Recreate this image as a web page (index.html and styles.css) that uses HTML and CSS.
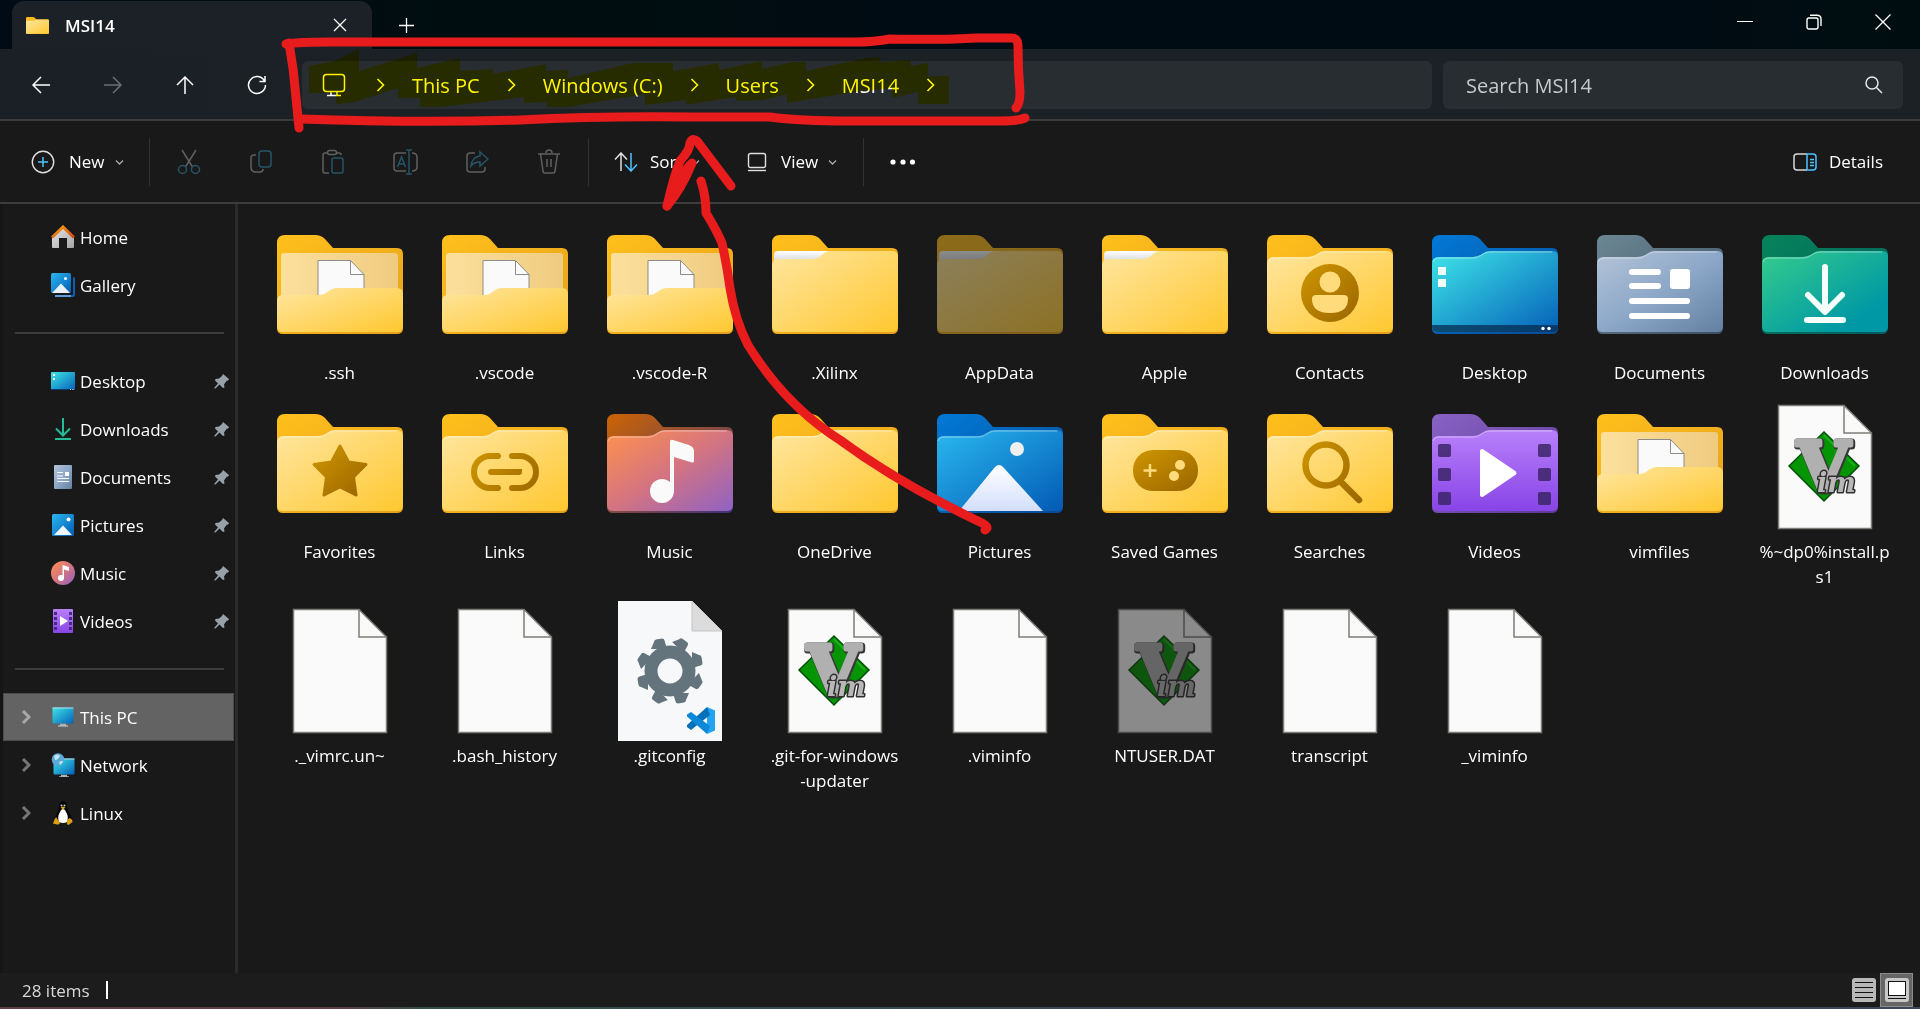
FILE: index.html
```html
<!DOCTYPE html>
<html lang="en">
<head>
<meta charset="utf-8">
<meta name="viewport" content="width=device-width, initial-scale=1">
<title>MSI14</title>
<link rel="stylesheet" href="styles.css">
</head>
<body>

<svg class="defs" width="0" height="0" aria-hidden="true">
  <defs>
    <linearGradient id="yellowFront" x1="0" y1="0" x2="1" y2="1"><stop offset="0" stop-color="#ffe6a0"/><stop offset="1" stop-color="#ffc830"/></linearGradient>
    <linearGradient id="yellowBack" x1="0" y1="0" x2="1" y2="1"><stop offset="0" stop-color="#ffc01c"/><stop offset="1" stop-color="#e5a01c"/></linearGradient>
    <linearGradient id="panel" x1="0" y1="0" x2="1" y2="0"><stop offset="0" stop-color="#fbe09c"/><stop offset="1" stop-color="#efcb80"/></linearGradient>
    <linearGradient id="paper" x1="0" y1="0" x2="0" y2="1"><stop offset="0" stop-color="#ffffff"/><stop offset="1" stop-color="#cfd2d6"/></linearGradient>
    <linearGradient id="ochre" x1="0" y1="0" x2="1" y2="1"><stop offset="0" stop-color="#cf9600"/><stop offset="1" stop-color="#9a6600"/></linearGradient>
    <linearGradient id="ochreFlat" gradientUnits="userSpaceOnUse" x1="30" y1="35" x2="96" y2="85"><stop offset="0" stop-color="#cf9600"/><stop offset="1" stop-color="#9a6600"/></linearGradient>
    <linearGradient id="deskFront" x1="0" y1="0" x2="1" y2="1"><stop offset="0" stop-color="#3ee6e8"/><stop offset="1" stop-color="#0560b8"/></linearGradient>
    <linearGradient id="blueBack" x1="0" y1="0" x2="1" y2="1"><stop offset="0" stop-color="#0279d6"/><stop offset="1" stop-color="#0a4a94"/></linearGradient>
    <linearGradient id="picFront" x1="0" y1="0" x2="1" y2="1"><stop offset="0" stop-color="#2ab8f0"/><stop offset="1" stop-color="#035ab4"/></linearGradient>
    <linearGradient id="docFront" x1="0" y1="0" x2="1" y2="1"><stop offset="0" stop-color="#b4c4d8"/><stop offset=".5" stop-color="#8da8c8"/><stop offset="1" stop-color="#6480a0"/></linearGradient>
    <linearGradient id="docBack" x1="0" y1="0" x2="1" y2="1"><stop offset="0" stop-color="#6c8794"/><stop offset="1" stop-color="#3c5064"/></linearGradient>
    <linearGradient id="downFront" x1="0" y1="0" x2="1" y2="1"><stop offset="0" stop-color="#34cc8c"/><stop offset=".8" stop-color="#0098a4"/><stop offset="1" stop-color="#0098a8"/></linearGradient>
    <linearGradient id="downBack" x1="0" y1="0" x2="1" y2="1"><stop offset="0" stop-color="#06845a"/><stop offset="1" stop-color="#045c60"/></linearGradient>
    <linearGradient id="musicFront" x1="0" y1="0" x2="1" y2="1"><stop offset="0" stop-color="#ff924c"/><stop offset=".5" stop-color="#d47480"/><stop offset="1" stop-color="#8f62c4"/></linearGradient>
    <linearGradient id="musicBack" x1="0" y1="0" x2="1" y2="1"><stop offset="0" stop-color="#cc6404"/><stop offset="1" stop-color="#40307c"/></linearGradient>
    <linearGradient id="videoFront" x1="0" y1="0" x2="0" y2="1"><stop offset="0" stop-color="#b880fa"/><stop offset="1" stop-color="#8844e6"/></linearGradient>
    <linearGradient id="videoBack" x1="0" y1="0" x2="1" y2="1"><stop offset="0" stop-color="#8862c4"/><stop offset="1" stop-color="#5c3a98"/></linearGradient>
    <linearGradient id="snow" x1="0" y1="0" x2="0" y2="1"><stop offset="0" stop-color="#ffffff"/><stop offset="1" stop-color="#d2defc"/></linearGradient>
    <linearGradient id="roof" x1="0" y1="0" x2="1" y2="1"><stop offset="0" stop-color="#ffa010"/><stop offset="1" stop-color="#d04810"/></linearGradient>
    <linearGradient id="wall" x1="0" y1="0" x2="1" y2="1"><stop offset="0" stop-color="#e6e6e6"/><stop offset="1" stop-color="#a4a4a4"/></linearGradient>

    <g id="folder">
      <path class="folder-back" d="M0 8Q0 0 8 0H38Q44 0 48 4L56 13H120Q126 13 126 19V93Q126 99 120 99H6Q0 99 0 93Z"/>
      <path class="folder-front" d="M0 29Q0 22 7 22H40Q46 22 50 19Q54 16 58 16H120Q126 16 126 22V91Q126 97 120 97H6Q0 97 0 91Z"/>
      <path d="M1 27Q2 23 7 23H40Q46 23 51 19Q54 17 58 17H120" fill="none" stroke="#fff" stroke-opacity=".3" stroke-width="1.5"/>
    </g>
    <g id="folder-papers">
      <path class="folder-back" d="M0 8Q0 0 8 0H38Q44 0 48 4L56 13H120Q126 13 126 19V93Q126 99 120 99H6Q0 99 0 93Z"/>
      <path d="M2 28V20Q2 16 6 16H60V28Z" fill="url(#paper)"/>
      <path class="folder-front" d="M0 30Q0 24 7 24H40Q46 24 50 20Q54 16 58 16H120Q126 16 126 22V91Q126 97 120 97H6Q0 97 0 91Z"/>
    </g>
    <g id="folder-open">
      <path class="folder-back" d="M0 8Q0 0 8 0H38Q44 0 48 4L56 13H120Q126 13 126 19V93Q126 99 120 99H6Q0 99 0 93Z"/>
      <path d="M4 62V21Q4 18 7 18H118Q121 18 121 21V62Z" fill="url(#panel)"/>
      <path d="M41 64V25.500H73.500L87 39.500V64Z" fill="#fafafa" stroke="#8c8c88"/>
      <path d="M73.500 25.500V39.500H87" fill="none" stroke="#8c8c88"/>
      <path class="folder-front" d="M0 66Q0 60 6 60H42Q47 60 51 56.500Q55 53 60 53H120Q126 53 126 59V91Q126 97 120 97H6Q0 97 0 91Z"/>
    </g>
    <g id="doc">
      <path d="M25.500 10.500H91L118.500 38V133.500H25.500Z" fill="#fafafa" stroke="#7c7c78" stroke-width="1.500"/>
      <path d="M91 10.500V38H118.500" fill="none" stroke="#7c7c78" stroke-width="1.500"/>
    </g>
    <g id="vim">
      <path d="M71 37L106 71L71 106L36 71Z" fill="#049404" stroke="#04500a" stroke-width="1.500"/>
      <path d="M71 40L102 71" stroke="#2cc42c" stroke-opacity=".6" stroke-width="2" fill="none"/>
      <text class="vim-v vim-edge" x="45" y="96">V</text>
      <text class="vim-v" x="44" y="95">V</text>
      <text class="vim-im vim-im-edge" x="64" y="97">im</text>
      <text class="vim-im" x="64" y="97">im</text>
    </g>

    <g id="pin"><path d="M9 1L15 6L14 7.500L12.500 8L10 11.500L10.500 14.500L9 15L5.500 11.500L1.500 15.500L.5 15.500V14.500L4 10.500L1 7.500L1.500 6L5 5.500L8 3Z" fill="#98a1a8"/></g>
    <g id="chev-down"><path d="M1 3.500L4.500 7L8 3.500" fill="none" stroke="#a8a8a8" stroke-width="1.300"/></g>
    <g id="chev-right"><path d="M2 1L8 7L2 13" fill="none" stroke="currentColor"/></g>
    <g id="monitor">
      <rect x="1.500" y="2.500" width="21" height="16" rx="1" fill="url(#deskFront)"/>
      <path d="M1.500 3H22.500" stroke="#b4d8e0" stroke-width="1"/>
      <path d="M7 21H17M9 19.500H15" stroke="#a8b4bc" stroke-width="1.500"/>
    </g>
  </defs>
</svg>

<header class="titlebar">
  <div class="tab">
    <svg class="tab-icon yellow" viewBox="0 0 126 99" preserveAspectRatio="none"><use href="#folder"/></svg>
    <span class="tab-title">MSI14</span>
    <button class="tab-close" aria-label="Close tab"><svg width="14" height="14" viewBox="0 0 14 14"><path d="M1 1L13 13M13 1L1 13" stroke="#fff" stroke-width="1.300"/></svg></button>
  </div>
  <button class="tab-new" aria-label="New tab"><svg width="15" height="15" viewBox="0 0 15 15"><path d="M7.500 0V15M0 7.500H15" stroke="#fff" stroke-width="1.300"/></svg></button>
  <div class="window-controls">
    <button aria-label="Minimize"><svg width="16" height="16" viewBox="0 0 16 16"><path d="M0 7.500H16" stroke="#fff"/></svg></button>
    <button aria-label="Restore"><svg width="16" height="16" viewBox="0 0 16 16" fill="none" stroke="#fff" stroke-width="1.400"><rect x="1" y="4" width="11" height="11" rx="2"/><path d="M4 1.200H11Q15 1.200 15 5V12"/></svg></button>
    <button aria-label="Close"><svg width="16" height="16" viewBox="0 0 16 16"><path d="M.5 .5L15.500 15.500M15.500 .5L.5 15.500" stroke="#fff" stroke-width="1.300"/></svg></button>
  </div>
</header>

<div class="navbar">
  <button class="nav-btn" aria-label="Back"><svg width="20" height="20" viewBox="0 0 20 20"><path d="M19 10H2M10 2L2 10L10 18"/></svg></button>
  <button class="nav-btn off" aria-label="Forward"><svg width="20" height="20" viewBox="0 0 20 20"><path d="M1 10H18M10 2L18 10L10 18"/></svg></button>
  <button class="nav-btn" aria-label="Up"><svg width="20" height="20" viewBox="0 0 20 20"><path d="M10 19V2M2 10L10 2L18 10"/></svg></button>
  <button class="nav-btn" aria-label="Refresh"><svg width="20" height="20" viewBox="0 0 20 20"><path d="M17.500 6A8.500 8.500 0 1 0 18.500 10M18 1V6.500H12.500"/></svg></button>
  <nav class="address" aria-label="Address">
    <svg class="pc-icon" width="24" height="24" viewBox="0 0 24 24" fill="none" stroke="#fff" stroke-width="1.500"><rect x="1.500" y="1.500" width="21" height="17" rx="3"/><path d="M9 18.500V22M15 18.500V22M5 22.500H19"/></svg>
    <svg class="crumb-sep" viewBox="0 0 10 14"><use href="#chev-right"/></svg>
    <a href="#">This PC</a>
    <svg class="crumb-sep" viewBox="0 0 10 14"><use href="#chev-right"/></svg>
    <a href="#">Windows (C:)</a>
    <svg class="crumb-sep" viewBox="0 0 10 14"><use href="#chev-right"/></svg>
    <a href="#">Users</a>
    <svg class="crumb-sep" viewBox="0 0 10 14"><use href="#chev-right"/></svg>
    <a href="#">MSI14</a>
    <svg class="crumb-sep" viewBox="0 0 10 14"><use href="#chev-right"/></svg>
  </nav>
  <div class="search">
    <input type="search" placeholder="Search MSI14" aria-label="Search MSI14">
    <svg width="18" height="18" viewBox="0 0 18 18" fill="none" stroke="#e8e8e8" stroke-width="1.500"><circle cx="7" cy="7" r="6"/><path d="M11.500 11.500L17 17"/></svg>
  </div>
</div>

<div class="commands">
  <button class="cmd cmd-new">
    <svg width="24" height="24" viewBox="0 0 24 24" fill="none"><circle cx="12" cy="12" r="10.700" stroke="#e0e0e0" stroke-width="1.400"/><path d="M12 7V17M7 12H17" stroke="#4cc2ff" stroke-width="1.500"/></svg>
    <span>New</span><svg width="9" height="10" viewBox="0 0 9 10"><use href="#chev-down"/></svg>
  </button>
  <span class="rule"></span>
  <button class="cmd-icon" aria-label="Cut"><svg width="24" height="26" viewBox="0 0 24 26"><path d="M5 1L15.500 18M19 1L8.500 18"/><g class="blue"><circle cx="5.500" cy="20.500" r="4"/><circle cx="18.500" cy="20.500" r="4"/></g></svg></button>
  <button class="cmd-icon" aria-label="Copy"><svg width="24" height="26" viewBox="0 0 24 26"><path d="M7 6H5Q2 6 2 9V18Q2 23 7 23H11Q14 23 14 20"/><rect class="blue" x="10" y="2" width="12" height="16" rx="3"/></svg></button>
  <button class="cmd-icon" aria-label="Paste"><svg width="24" height="26" viewBox="0 0 24 26"><path d="M7 4H4Q2 4 2 6V22Q2 24 4 24H8M16 4H18Q20 4 20 6"/><rect x="6.500" y="1.500" width="9" height="4" rx="2"/><rect class="blue" x="11" y="9" width="11" height="15" rx="2"/></svg></button>
  <button class="cmd-icon" aria-label="Rename"><svg width="26" height="26" viewBox="0 0 26 26"><path d="M14 4H5Q2 4 2 7V19Q2 22 5 22H14M20 4Q25 4 25 8V18Q25 22 20 22"/><path class="blue" d="M14 1H20M17 1V25M14 25H20M5.500 18L9.500 8L13.500 18M7 15H12"/></svg></button>
  <button class="cmd-icon" aria-label="Share"><svg width="24" height="26" viewBox="0 0 24 26"><path d="M10 4H5Q2 4 2 7V20Q2 23 5 23H17Q20 23 20 20V18"/><path class="blue" d="M15 3L23 10L15 17V13Q9 13 6 17Q7 8 15 7Z"/></svg></button>
  <button class="cmd-icon" aria-label="Delete"><svg width="24" height="26" viewBox="0 0 24 26"><path d="M1 5H23M3.500 5L6 22Q6 24 8 24H16Q18 24 18 22L20.500 5M9 4Q9 1 12 1Q15 1 15 4M10 10V18M14 10V18"/></svg></button>
  <span class="rule"></span>
  <button class="cmd cmd-sort">
    <svg width="24" height="20" viewBox="0 0 24 20" fill="none" stroke-width="1.500"><path d="M7 19V1M1 7.500L7 1L13 7.500" stroke="#e0e0e0"/><path d="M17 1V19M11 12.500L17 19L23 12.500" stroke="#4cc2ff"/></svg>
    <span>Sort</span><svg width="9" height="10" viewBox="0 0 9 10"><use href="#chev-down"/></svg>
  </button>
  <button class="cmd cmd-view">
    <svg width="20" height="20" viewBox="0 0 20 20" fill="none" stroke="#e0e0e0" stroke-width="1.400"><rect x="1.500" y="1.500" width="17" height="14" rx="2"/><path d="M1 18.500H19"/></svg>
    <span>View</span><svg width="9" height="10" viewBox="0 0 9 10"><use href="#chev-down"/></svg>
  </button>
  <span class="rule"></span>
  <button class="cmd-icon" aria-label="See more"><svg width="26" height="6" viewBox="0 0 26 6"><g fill="#fff" stroke="none"><circle cx="3" cy="3" r="2.600"/><circle cx="13" cy="3" r="2.600"/><circle cx="22.500" cy="3" r="2.600"/></g></svg></button>
  <button class="cmd cmd-details">
    <svg width="24" height="18" viewBox="0 0 24 18" fill="none" stroke-width="1.500"><path d="M14 1H4Q1 1 1 4V14Q1 17 4 17H14" stroke="#d8d8d8"/><path d="M14 1H20Q23 1 23 4V14Q23 17 20 17H14ZM17 6.500H21M17 9.500H21M17 12.500H21" stroke="#4cc2ff"/></svg>
    <span>Details</span>
  </button>
</div>

<div class="body">
  <nav class="sidebar" aria-label="Places">
    <a class="place" href="#"><svg class="place-icon" viewBox="0 0 24 24"><path d="M1 13L12 3L23 13V22Q23 23 22 23H16V13H8V23H2Q1 23 1 22Z" fill="url(#wall)"/><path d="M1 12.500L12 2L23 12.500" fill="none" stroke="url(#roof)" stroke-width="3"/></svg>Home</a>
    <a class="place" href="#"><svg class="place-icon" viewBox="0 0 24 24"><path d="M22 4Q24 4 24 6V22Q24 24 22 24H20V22H22Z" fill="#0a60b8"/><path d="M4 23H20" stroke="#5c9cdc" stroke-width="2"/><rect width="20" height="20" rx="1.500" fill="url(#picFront)"/><path d="M1 20L10 10.500L19 20Z" fill="#e8f0fc"/><circle cx="14.500" cy="5.500" r="1.500" fill="#fff"/></svg>Gallery</a>
    <hr>
    <a class="place" href="#"><svg class="place-icon" viewBox="0 0 24 24"><rect y="3" width="24" height="18" rx="1" fill="url(#deskFront)"/><path d="M2 5H4V7H2ZM2 9H4V11H2Z" fill="#fff"/><path d="M0 20.500H24" stroke="#0a3c78"/><path d="M19 20.500H20M21.500 20.500H22.500" stroke="#fff"/></svg>Desktop<svg class="pin" viewBox="0 0 16 16"><use href="#pin"/></svg></a>
    <a class="place" href="#"><svg class="place-icon" viewBox="0 0 24 24" fill="none" stroke="#22bc98" stroke-width="2"><path d="M12 1V18M5 11.500L12 18.500L19 11.500M4 22H20"/></svg>Downloads<svg class="pin" viewBox="0 0 16 16"><use href="#pin"/></svg></a>
    <a class="place" href="#"><svg class="place-icon" viewBox="0 0 24 24"><rect x="3" width="18" height="24" rx="1" fill="url(#docFront)"/><path d="M6 7.500H12M6 11H12M6 13.500H18M6 16.500H18" stroke="#fff" stroke-width="1.200"/><rect x="14" y="7" width="4" height="4" fill="#fff"/></svg>Documents<svg class="pin" viewBox="0 0 16 16"><use href="#pin"/></svg></a>
    <a class="place" href="#"><svg class="place-icon" viewBox="0 0 24 24"><rect x="1" y="1" width="22" height="22" rx="1.500" fill="url(#picFront)"/><path d="M3 22L12 12.500L21 22Z" fill="#f0f6fe"/><circle cx="17.500" cy="6.500" r="2" fill="#fff"/></svg>Pictures<svg class="pin" viewBox="0 0 16 16"><use href="#pin"/></svg></a>
    <a class="place" href="#"><svg class="place-icon" viewBox="0 0 24 24"><circle cx="12" cy="12" r="12" fill="url(#musicFront)"/><circle cx="10" cy="17" r="3" fill="#fff"/><path d="M11.500 17V4L18 6V10L13 8.500V17Z" fill="#fff"/></svg>Music<svg class="pin" viewBox="0 0 16 16"><use href="#pin"/></svg></a>
    <a class="place" href="#"><svg class="place-icon" viewBox="0 0 24 24"><rect x="2" width="20" height="24" rx="1" fill="url(#videoFront)"/><path d="M3 3H6V6H3ZM3 8H6V11H3ZM3 13H6V16H3ZM3 18H6V21H3ZM18 3H21V6H18ZM18 8H21V11H18ZM18 13H21V16H18ZM18 18H21V21H18Z" fill="#4a2888"/><path d="M9 7V17L17 12Z" fill="#fff"/></svg>Videos<svg class="pin" viewBox="0 0 16 16"><use href="#pin"/></svg></a>
    <hr>
    <a class="place root selected" href="#"><svg class="expand" viewBox="0 0 10 14"><use href="#chev-right"/></svg><svg class="place-icon" viewBox="0 0 24 24"><use href="#monitor"/></svg>This PC</a>
    <a class="place root" href="#"><svg class="expand" viewBox="0 0 10 14"><use href="#chev-right"/></svg><svg class="place-icon" viewBox="0 0 24 24"><g transform="translate(1 3)"><use href="#monitor"/></g><circle cx="7" cy="6.500" r="6.300" fill="#5aa8d8"/><path d="M3 3Q7 0 9 3Q7 7 4 7ZM8 9Q12 7 12 9L9 12Z" fill="#c4e4f0"/></svg>Network</a>
    <a class="place root" href="#"><svg class="expand" viewBox="0 0 10 14"><use href="#chev-right"/></svg><svg class="place-icon" viewBox="0 0 24 24"><path d="M12 0Q16 0 16 6Q16 9 19 13Q22 18 20 20L12 22L4 20Q3 17 6 12Q8 9 8 6Q8 0 12 0Z" fill="#050505"/><path d="M12 8Q14 8 15 11Q18 16 16 21Q12 23 8 21Q6 16 9 11Q10 8 12 8Z" fill="#fff"/><circle cx="10.500" cy="4.500" r="1" fill="#ccc"/><circle cx="13.500" cy="4.500" r="1" fill="#ccc"/><path d="M9.500 6.500L12 5.500L14.500 6.500L12 8.500Z" fill="#e0a010"/><path d="M5 16L9 22Q8 24 6 23.500L2 22.500Q3 19 5 16ZM19 17Q22 19 21.500 21L17.500 24Q15.500 24 16 20Q16 18 19 17Z" fill="#dca010"/></svg>Linux</a>
  </nav>

  <main class="files">
    <ul class="grid">
      <li><a class="item" href="#"><svg class="art yellow" viewBox="-9 -19 144 144"><use href="#folder-open"/></svg><span>.ssh</span></a></li>
      <li><a class="item" href="#"><svg class="art yellow" viewBox="-9 -19 144 144"><use href="#folder-open"/></svg><span>.vscode</span></a></li>
      <li><a class="item" href="#"><svg class="art yellow" viewBox="-9 -19 144 144"><use href="#folder-open"/></svg><span>.vscode-R</span></a></li>
      <li><a class="item" href="#"><svg class="art yellow" viewBox="-9 -19 144 144"><use href="#folder-papers"/></svg><span>.Xilinx</span></a></li>
      <li><a class="item hidden-file" href="#"><svg class="art yellow" viewBox="-9 -19 144 144"><use href="#folder-papers"/></svg><span>AppData</span></a></li>
      <li><a class="item" href="#"><svg class="art yellow" viewBox="-9 -19 144 144"><use href="#folder-papers"/></svg><span>Apple</span></a></li>
      <li><a class="item" href="#"><svg class="art yellow" viewBox="-9 -19 144 144"><use href="#folder"/><circle cx="63" cy="58" r="29" fill="url(#ochre)"/><circle cx="63" cy="47" r="10.500" fill="#ffdb7c"/><path d="M49 60H77Q81 60 81 64Q81 78 63 78Q45 78 45 64Q45 60 49 60Z" fill="#ffdb7c"/></svg><span>Contacts</span></a></li>
      <li><a class="item" href="#"><svg class="art desk" viewBox="-9 -19 144 144"><use href="#folder"/><path d="M6 32H14V40H6ZM6 44H14V52H6Z" fill="#f0fcfc"/><path d="M0 90H126V91Q126 97 120 97H6Q0 97 0 91Z" fill="#062c50" fill-opacity=".75"/><circle cx="111" cy="93.500" r="1.700" fill="#fff"/><circle cx="117" cy="93.500" r="1.700" fill="#fff"/></svg><span>Desktop</span></a></li>
      <li><a class="item" href="#"><svg class="art docs" viewBox="-9 -19 144 144"><use href="#folder"/><path d="M35 37H61M35 51H61M35 66H90M35 81H90" stroke="#fff" stroke-width="6" stroke-linecap="round"/><rect x="73" y="34" width="20" height="20" rx="3" fill="#fff"/></svg><span>Documents</span></a></li>
      <li><a class="item" href="#"><svg class="art down" viewBox="-9 -19 144 144"><use href="#folder"/><path d="M63 32V76M46 60L63 77L80 60M45 85H81" fill="none" stroke="#f4fffc" stroke-width="6" stroke-linecap="round" stroke-linejoin="round"/></svg><span>Downloads</span></a></li>

      <li><a class="item" href="#"><svg class="art yellow" viewBox="-9 -19 144 144"><use href="#folder"/><path d="M63 32L71.500 48L89 50.500L76.500 63L79 81L63 73L47 81L49.500 63L37 50.500L54.500 48Z" fill="url(#ochre)" stroke="url(#ochre)" stroke-width="3" stroke-linejoin="round"/></svg><span>Favorites</span></a></li>
      <li><a class="item" href="#"><svg class="art yellow" viewBox="-9 -19 144 144"><use href="#folder"/><path d="M56 42H48A16 16 0 0 0 48 74H56M70 42H78A16 16 0 0 1 78 74H70M49 58H77V58.010" fill="none" stroke="url(#ochreFlat)" stroke-width="6" stroke-linecap="round"/></svg><span>Links</span></a></li>
      <li><a class="item" href="#"><svg class="art music" viewBox="-9 -19 144 144"><use href="#folder"/><circle cx="55" cy="77" r="12" fill="#fafafa"/><path d="M63 77V28Q63 25 66 26L82 31Q87 33 87 37V47Q87 49 85 48.500L67 43V77Z" fill="#fafafa"/></svg><span>Music</span></a></li>
      <li><a class="item" href="#"><svg class="art yellow" viewBox="-9 -19 144 144"><use href="#folder"/></svg><span>OneDrive</span></a></li>
      <li><a class="item" href="#"><svg class="art pics" viewBox="-9 -19 144 144"><use href="#folder"/><path d="M22 97L58 53Q62 49 66 53L106 97Z" fill="url(#snow)"/><circle cx="80" cy="35" r="7" fill="#f0f0f0"/></svg><span>Pictures</span></a></li>
      <li><a class="item" href="#"><svg class="art yellow" viewBox="-9 -19 144 144"><use href="#folder"/><rect x="31" y="36" width="65" height="41" rx="20" fill="url(#ochre)"/><path d="M41.500 56.500H54.500M48 50V63" stroke="#ffdb7c" stroke-width="2.500"/><circle cx="78" cy="51" r="5" fill="#ffdb7c"/><circle cx="72" cy="62" r="5" fill="#ffdb7c"/></svg><span>Saved Games</span></a></li>
      <li><a class="item" href="#"><svg class="art yellow" viewBox="-9 -19 144 144"><use href="#folder"/><circle cx="59" cy="51" r="20.500" fill="none" stroke="url(#ochreFlat)" stroke-width="6.500"/><path d="M73 67L92 86" stroke="url(#ochreFlat)" stroke-width="6.500" stroke-linecap="round"/></svg><span>Searches</span></a></li>
      <li><a class="item" href="#"><svg class="art video" viewBox="-9 -19 144 144"><use href="#folder"/><g fill="#3c2468" fill-opacity=".85"><rect x="6" y="30" width="13" height="13" rx="2"/><rect x="6" y="54" width="13" height="13" rx="2"/><rect x="6" y="78" width="13" height="13" rx="2"/><rect x="106" y="30" width="13" height="13" rx="2"/><rect x="106" y="54" width="13" height="13" rx="2"/><rect x="106" y="78" width="13" height="13" rx="2"/></g><path d="M50 37V81L82.500 59Z" fill="#fff" stroke="#fff" stroke-width="4" stroke-linejoin="round"/></svg><span>Videos</span></a></li>
      <li><a class="item" href="#"><svg class="art yellow" viewBox="-9 -19 144 144"><use href="#folder-open"/></svg><span>vimfiles</span></a></li>
      <li><a class="item" href="#"><svg class="art" viewBox="0 0 144 144"><use href="#doc"/><use href="#vim"/></svg><span>%~dp0%install.p<wbr>s1</span></a></li>

      <li><a class="item" href="#"><svg class="art" viewBox="0 0 144 144"><use href="#doc"/></svg><span>._vimrc.un~</span></a></li>
      <li><a class="item" href="#"><svg class="art" viewBox="0 0 144 144"><use href="#doc"/></svg><span>.bash_history</span></a></li>
      <li><a class="item" href="#"><svg class="art" viewBox="0 0 144 144"><path d="M20 2H94L124 32V142H20Z" fill="#f7f8fa"/><path d="M94 2V32H124Z" fill="#dcdcdc" stroke="#c4c4c4"/><circle cx="72" cy="72" r="19" fill="none" stroke="#64747c" stroke-width="13"/><g fill="#64747c"><path id="tooth" d="M56 43Q56 41 58 40.500L64 39.500Q66 39.500 66.500 41.500L69 50H53Z"/><use href="#tooth" transform="rotate(45 72 72)"/><use href="#tooth" transform="rotate(90 72 72)"/><use href="#tooth" transform="rotate(135 72 72)"/><use href="#tooth" transform="rotate(180 72 72)"/><use href="#tooth" transform="rotate(225 72 72)"/><use href="#tooth" transform="rotate(270 72 72)"/><use href="#tooth" transform="rotate(315 72 72)"/></g><path d="M109 108L117 111.500V131.500L109 135Z" fill="#22a4f0"/><path d="M109 108L112 116L93 131L89 128V126Z" fill="#0470b8"/><path d="M109 135L112 127L93 113L89 115.500V117.500Z" fill="#0c88d8"/></svg><span>.gitconfig</span></a></li>
      <li><a class="item" href="#"><svg class="art" viewBox="0 0 144 144"><use href="#doc"/><use href="#vim"/></svg><span>.git-for-windows<wbr><span class="keep">-updater</span></span></a></li>
      <li><a class="item" href="#"><svg class="art" viewBox="0 0 144 144"><use href="#doc"/></svg><span>.viminfo</span></a></li>
      <li><a class="item hidden-file" href="#"><svg class="art" viewBox="0 0 144 144"><use href="#doc"/><use href="#vim"/></svg><span>NTUSER.DAT</span></a></li>
      <li><a class="item" href="#"><svg class="art" viewBox="0 0 144 144"><use href="#doc"/></svg><span>transcript</span></a></li>
      <li><a class="item" href="#"><svg class="art" viewBox="0 0 144 144"><use href="#doc"/></svg><span>_viminfo</span></a></li>
    </ul>
  </main>
</div>

<footer class="status">
  <span>28 items</span><span class="caret"></span>
  <div class="view-modes">
    <button aria-label="Details view"><svg width="24" height="24" viewBox="0 0 24 24"><rect width="24" height="24" rx="3" fill="#b8b8b8"/><path d="M3 4.500H21M3 9.500H21M3 14.500H21M3 19.500H21" stroke="#111"/></svg></button>
    <button class="on" aria-label="Large icons view"><svg width="24" height="24" viewBox="0 0 24 24"><rect width="24" height="24" rx="3" fill="#c8c8c8"/><rect x="3.500" y="3.500" width="17" height="14" fill="#fff" stroke="#111"/><path d="M3 20.500H21" stroke="#111"/></svg></button>
  </div>
</footer>

<svg class="ink highlighter" width="1040" height="540" viewBox="0 0 1040 540" aria-hidden="true">
  <path fill="#fff500" d="M309 66L335 61L359 49V71L417 53V68L460 58V71L493 69V74L546 64V71L568 70V78L633 63H673V71L719 63V70L762 61V69L793 62H806V71L866 58L880 57V62L911 60V66L928 63V76H949V104H918V92L892 98V88L854 92L787 103V94L764 100L736 101V97L691 104H686V100L645 105V94L568 107H547V102L524 103V97L483 102L440 107H420V98H398V88L355 102L336 104V93H309Z"/>
</svg>
<svg class="ink" width="1040" height="540" viewBox="0 0 1040 540" fill="none" stroke="#e81c1c" stroke-width="9" stroke-linecap="round" stroke-linejoin="round" aria-hidden="true">
  <path d="M286 44Q300 42 330 42H855Q875 42 890 39Q950 40 975 38H1012Q1018 38 1018 46Q1018 70 1020 92Q1020 104 1016 108"/>
  <path d="M289 43Q294 70 296 98L299 128"/>
  <path d="M301 119Q420 123 520 120Q600 116 690 117H770Q800 121 850 121H1000Q1018 121 1025 118"/>
  <path d="M667 206Q674 176 680 161Q690 150 690 143Q692 137 697 141L731 186"/>
  <path d="M667 206Q682 188 692 163Q680 174 667 206"/>
  <path d="M701 181Q706 196 706 213Q717 231 722 243Q727 266 730 288Q735 320 748 345Q785 405 840 440Q900 484 982 523Q990 527 985 530"/>
</svg>
</body>
</html>
```

FILE: styles.css
```css
* { box-sizing: border-box; }

body {
  position: relative;
  display: flex;
  flex-direction: column;
  min-height: 100vh;
  margin: 0;
  background: #191919;
  color: #fff;
  font: 17px/25px "Open Sans", "Noto Sans", sans-serif;
}

button {
  display: flex;
  align-items: center;
  justify-content: center;
  padding: 0;
  border: 0;
  background: none;
  color: inherit;
  font: inherit;
}

a { color: inherit; text-decoration: none; }
svg { flex: none; }
.defs { position: absolute; }

/* Title bar */
.titlebar {
  display: flex;
  height: 49px;
  padding: 1px 3px 0 12px;
  background: linear-gradient(90deg, #000b16, #000d0f 28%, #000c14 50%, #000c14 85%, #000d10);
}
.tab {
  display: flex;
  align-items: center;
  width: 360px;
  padding: 0 10px 0 14px;
  border-radius: 12px 12px 0 0;
  background: #1b2127;
}
.tab-icon { width: 23px; height: 17px; }
.tab-title { margin-left: 16px; font-weight: 600; }
.tab-close { width: 44px; height: 44px; margin-left: auto; }
.tab-new { width: 68px; }
.window-controls { display: flex; height: 42px; margin-left: auto; }
.window-controls button { width: 69px; }

/* Navigation row */
.navbar {
  display: flex;
  align-items: center;
  height: 72px;
  padding: 2px 17px 0 5px;
  border-bottom: 2px solid #3c3c3c;
  background: linear-gradient(90deg, #1b2027, #1c2124 35%, #1b2126 60%, #1c2125);
}
.nav-btn { width: 72px; height: 48px; }
.nav-btn path { fill: none; stroke: #fff; stroke-width: 1.5; }
.nav-btn.off path { stroke: #6c6f73; }
.address, .search {
  display: flex;
  align-items: center;
  height: 48px;
  border-radius: 6px;
  background: #272d31;
  font-size: 20px;
}
.address { flex: 1; margin: 0 11px 0 9px; padding-left: 20px; }
.pc-icon { margin-right: 3px; }
.crumb-sep { width: 63px; height: 14px; stroke-width: 1.6; }
.search { width: 460px; padding: 0 20px 0 23px; }
.search input {
  flex: 1;
  min-width: 0;
  padding: 0;
  border: 0;
  outline: 0;
  background: none;
  color: #fff;
  font: inherit;
}
.search input::placeholder { color: #c8caca; opacity: 1; }

/* Command bar */
.commands {
  display: flex;
  align-items: center;
  height: 83px;
  padding-right: 37px;
  border-bottom: 2px solid #3c3c3c;
}
.cmd { justify-content: flex-start; height: 48px; }
.cmd span { margin: 0 10px 0 14px; }
.cmd-new { width: 146px; padding-left: 31px; }
.cmd-sort { width: 143px; padding-left: 22px; }
.cmd-sort span { margin: 0 8px 0 12px; }
.cmd-view { width: 125px; padding-left: 12px; }
.cmd-details { margin-left: auto; }
.cmd-details span { margin: 0 0 0 12px; }
.cmd-icon { width: 72px; height: 48px; }
.cmd-icon svg { fill: none; stroke: #606060; stroke-width: 1.5; }
.cmd-icon .blue { stroke: #265468; }
.rule { width: 1px; height: 48px; margin: 0 3px; background: #333; }

/* Sidebar */
.body { display: flex; flex: 1; }
.sidebar {
  width: 238px;
  padding: 9px 1px 0 0;
  border-left: 3px solid #151515;
  border-right: 3px solid #2b2b2b;
}
.place {
  display: flex;
  align-items: center;
  height: 48px;
  padding: 0 3px 0 48px;
  border: 1px solid transparent;
}
.place-icon { width: 24px; height: 24px; margin: 0 5px 0 -1px; }
.pin { width: 16px; height: 16px; margin-left: auto; }
.root { padding-left: 17px; }
.expand { width: 10px; height: 14px; margin-right: 21px; color: #767676; stroke-width: 3; }
.selected { border-color: #4c4c4c; background: #636363; }
.selected .expand { color: #a8a8a8; }
hr {
  height: 2px;
  margin: 23px 10px 23px 12px;
  border: 0;
  background: #3c3c3c;
}

/* Items */
.files { flex: 1; min-width: 0; padding: 12px 0 0 19px; }
.grid {
  display: grid;
  grid-template-columns: repeat(auto-fill, 165px);
  row-gap: 10px;
  margin: 0;
  padding: 0;
  list-style: none;
}
.item {
  display: flex;
  flex-direction: column;
  align-items: center;
  padding: 0 10px;
  text-align: center;
}
.item > span { max-width: 100%; }
.keep { white-space: nowrap; }
.art { width: 144px; height: 144px; }
.hidden-file .art { opacity: .5; }

.folder-back { fill: var(--back); }
.folder-front { fill: var(--front); }
.yellow { --back: url(#yellowBack); --front: url(#yellowFront); }
.desk { --back: url(#blueBack); --front: url(#deskFront); }
.pics { --back: url(#blueBack); --front: url(#picFront); }
.docs { --back: url(#docBack); --front: url(#docFront); }
.down { --back: url(#downBack); --front: url(#downFront); }
.music { --back: url(#musicBack); --front: url(#musicFront); }
.video { --back: url(#videoBack); --front: url(#videoFront); }

.vim-v { font: bold 68px "DejaVu Serif", serif; fill: #b0b0b0; stroke: #b0b0b0; stroke-width: 5px; stroke-linejoin: round; }
.vim-v.vim-edge { fill: #383838; stroke: #383838; stroke-width: 7px; }
.vim-im { font: italic bold 27px "DejaVu Serif", serif; fill: #b8b8b8; }
.vim-im-edge { stroke: #303030; stroke-width: 3px; stroke-linejoin: round; }

/* Status bar */
.status {
  display: flex;
  align-items: center;
  height: 36px;
  padding: 0 7px 0 22px;
  border: 0 solid;
  border-width: 0 0 2px;
  border-image: linear-gradient(90deg, #5c4044, #5c4044 18%, #345048 22%, #3c4858 60%, #3c4858) 1;
  background: #1c1c1c;
  color: #d8d8d8;
}
.caret { width: 2px; height: 18px; margin-left: 16px; background: #fff; }
.view-modes { display: flex; margin-left: auto; }
.view-modes button { width: 33px; height: 34px; border: 1px solid transparent; }
.view-modes .on { border-color: #8c8c8c; background: #666; }

/* Pen marks over the window */
.ink { position: absolute; top: 0; left: 0; pointer-events: none; }
.highlighter { mix-blend-mode: multiply; }
```
